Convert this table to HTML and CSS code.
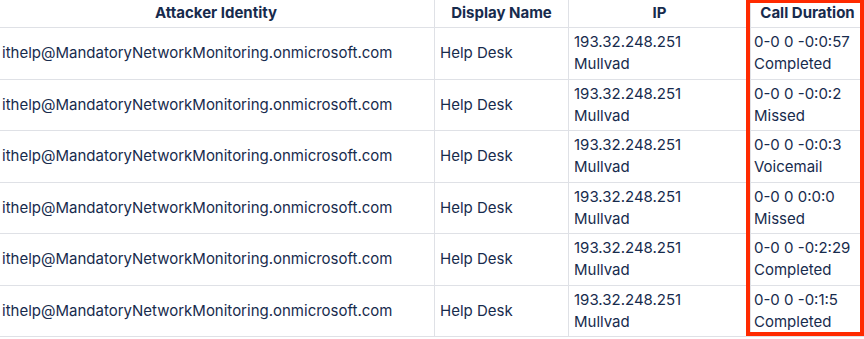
FILE: index.html
```html
<!DOCTYPE html>
<html>
<head>
<meta charset="utf-8">
<link rel="stylesheet" href="styles.css">
</head>
<body>
<div class="frame">
  <table class="calls">
    <colgroup>
      <col class="c-id"><col class="c-name"><col class="c-ip"><col class="c-dur">
    </colgroup>
    <thead>
      <tr><th>Attacker Identity</th><th>Display Name</th><th>IP</th><th>Call Duration</th></tr>
    </thead>
    <tbody>
      <tr><td>ithelp@MandatoryNetworkMonitoring.onmicrosoft.com</td><td>Help Desk</td><td>193.32.248.251<br>Mullvad</td><td>0-0 0 -0:0:57<br>Completed</td></tr>
      <tr><td>ithelp@MandatoryNetworkMonitoring.onmicrosoft.com</td><td>Help Desk</td><td>193.32.248.251<br>Mullvad</td><td>0-0 0 -0:0:2<br>Missed</td></tr>
      <tr><td>ithelp@MandatoryNetworkMonitoring.onmicrosoft.com</td><td>Help Desk</td><td>193.32.248.251<br>Mullvad</td><td>0-0 0 -0:0:3<br>Voicemail</td></tr>
      <tr><td>ithelp@MandatoryNetworkMonitoring.onmicrosoft.com</td><td>Help Desk</td><td>193.32.248.251<br>Mullvad</td><td>0-0 0 0:0:0<br>Missed</td></tr>
      <tr><td>ithelp@MandatoryNetworkMonitoring.onmicrosoft.com</td><td>Help Desk</td><td>193.32.248.251<br>Mullvad</td><td>0-0 0 -0:2:29<br>Completed</td></tr>
      <tr><td>ithelp@MandatoryNetworkMonitoring.onmicrosoft.com</td><td>Help Desk</td><td>193.32.248.251<br>Mullvad</td><td>0-0 0 -0:1:5<br>Completed</td></tr>
    </tbody>
  </table>
  <div class="highlight"></div>
</div>
</body>
</html>
```

FILE: styles.css
```css
html, body {
  margin: 0;
  padding: 0;
  background: #ffffff;
  overflow: hidden;
}

body {
  font-family: Inter, "Noto Sans", "Liberation Sans", sans-serif;
  color: #172b4d;
  font-size: 15px;
}

.frame {
  position: relative;
  width: 864px;
  height: 339px;
  overflow: hidden;
}

.calls {
  border-collapse: collapse;
  table-layout: fixed;
  width: 867px;
  margin-left: -3px;
}

.c-id { width: 437px; }
.c-name { width: 134px; }
.c-ip { width: 182px; }
.c-dur { width: 114px; }

.calls th,
.calls td {
  border: 1px solid #dfe1e6;
  vertical-align: middle;
  white-space: nowrap;
  overflow: hidden;
}

.calls th {
  font-weight: 700;
  text-align: center;
  line-height: 21px;
  padding: 2px 6px 4px;
  border-top: none;
  color: #172b4d;
}

.calls td {
  font-weight: 400;
  text-align: left;
  line-height: 22px;
  padding: 3.25px 5px;
}

.calls td:first-child {
  padding-left: 4px;
}

.calls td:last-child {
  padding-left: 3px;
}

.highlight {
  position: absolute;
  left: 746px;
  top: -1px;
  width: 110px;
  height: 329px;
  border: 4px solid #ff2a00;
}
```
